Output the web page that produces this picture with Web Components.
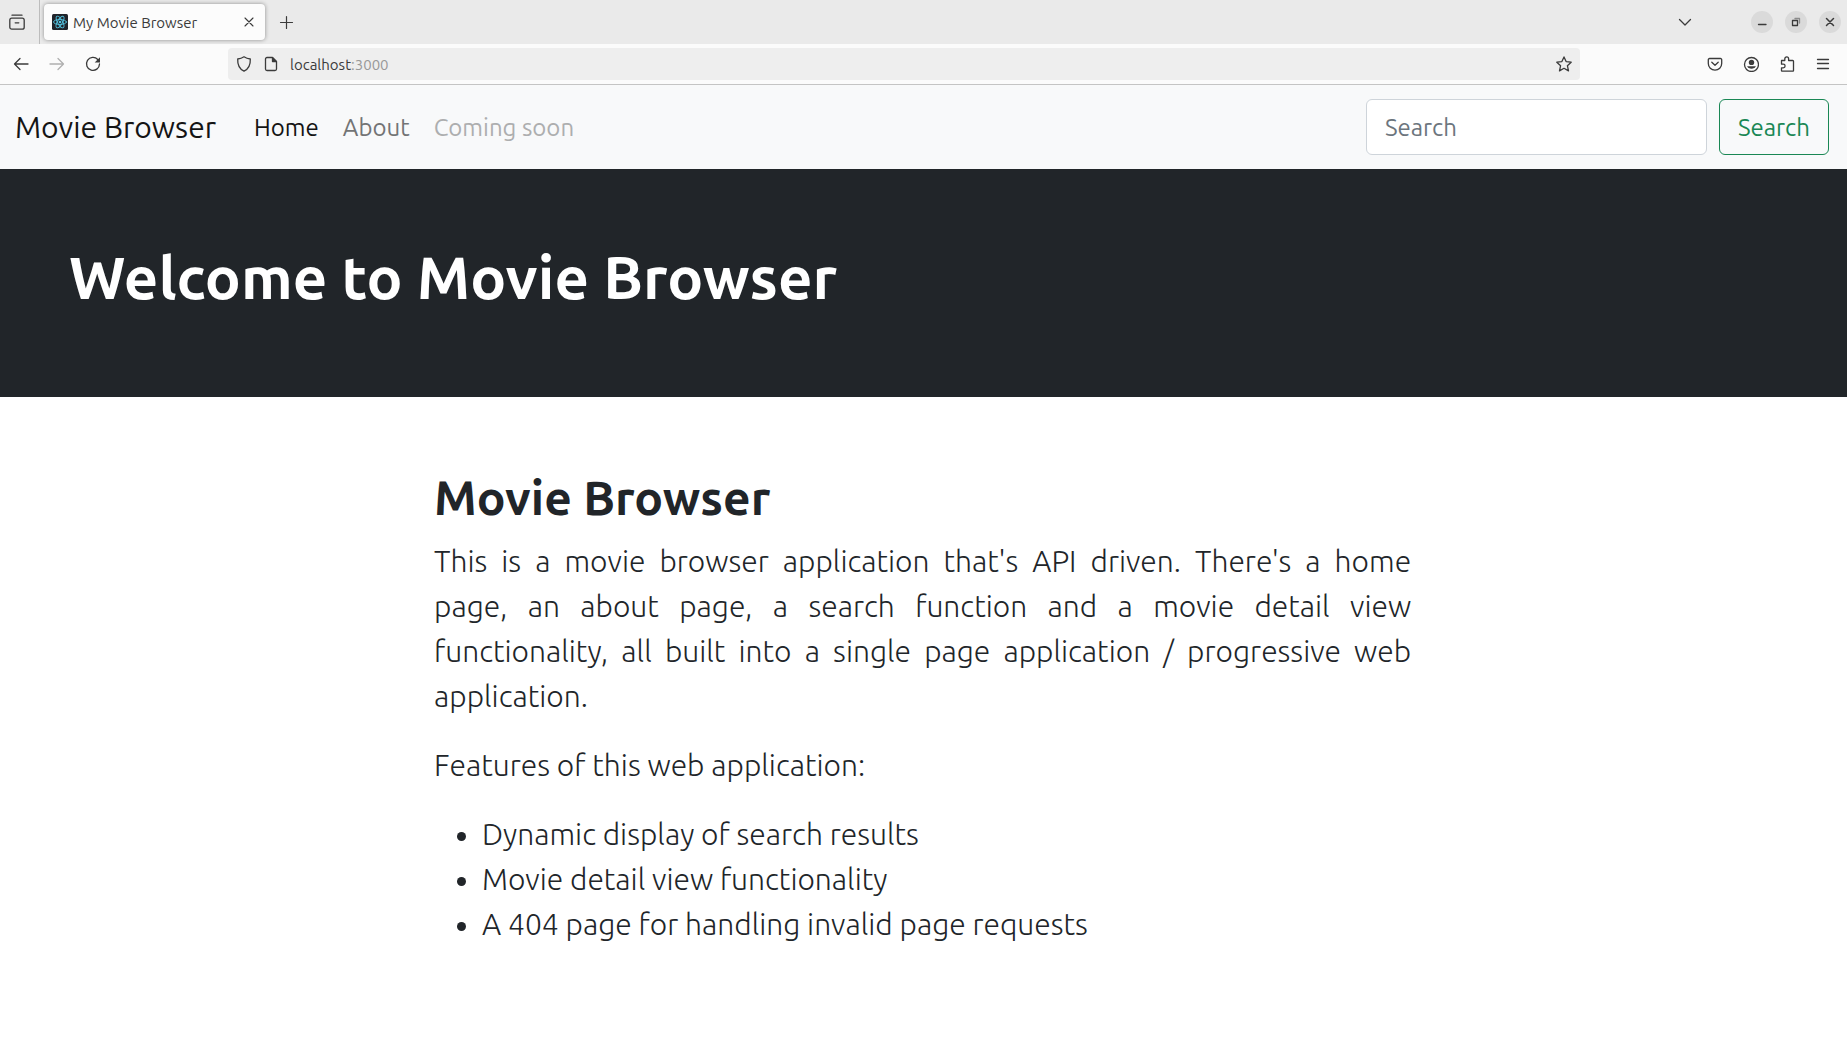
<!DOCTYPE html>
<html lang="en">
<head>
<meta charset="utf-8">
<title>My Movie Browser</title>
<style>
  html, body { margin: 0; min-height: 100%; background: #fff; }
  body {
    font-family: Ubuntu, "Noto Sans", sans-serif;
    color: #212529;
    font-size: 24px;
    line-height: 37px;
  }
</style>
</head>
<body>
<browser-chrome></browser-chrome>
<movie-navbar brand="Movie Browser">
  <nav-item href="#home" active>Home</nav-item>
  <nav-item href="#about">About</nav-item>
  <nav-item disabled>Coming soon</nav-item>
  <search-form slot="end"></search-form>
</movie-navbar>
<hero-banner>Welcome to Movie Browser</hero-banner>
<home-content></home-content>

<script>
const ICONS = {
  archive: '<path d="M3 1.200h10"/><rect x=".8" y="4.200" width="14.400" height="11" rx="2"/><path d="M6.200 8.800h3.600"/>',
  'tab-close': '<path d="M4 4l8 8M12 4l-8 8" stroke-width="1.1"/>',
  close: '<path d="M4.500 4.500l7 7M11.500 4.500l-7 7" stroke-width="1.5"/>',
  plus: '<path d="M8.500 2.500v12M2.500 8.500h12" stroke-width="1.200"/>',
  chevron: '<path d="M2.500 5.500L8 11l5.500-5.500"/>',
  back: '<path d="M15 8H1.500M7 2.500L1.500 8 7 13.500"/>',
  forward: '<path d="M1 8h13.500M9 2.500L14.500 8 9 13.500"/>',
  reload: '<path d="M12.800 3.500A6.500 6.500 0 1 0 14.500 8"/><path d="M15 1.200v5.300H9.700z" fill="currentColor" stroke="none"/>',
  shield: '<path d="M8 .8c2 1.400 4 2 6.300 2.200C14.600 9 12.500 13 8 15.200 3.500 13 1.400 9 1.700 3 4 2.800 6 2.200 8 .8z"/>',
  page: '<path d="M9.500 1.500H4a1.500 1.500 0 0 0-1.500 1.500v10A1.500 1.500 0 0 0 4 14.500h8a1.500 1.500 0 0 0 1.500-1.500V5.500z"/><path d="M9.500 1.800v3.700h3.700z" fill="currentColor"/>',
  star: '<path d="M8 .9l2.100 4.700 5.100.600-3.800 3.500 1.100 5.200L8 12.300l-4.500 2.600 1.100-5.200L.8 6.200l5.100-.600z"/>',
  pocket: '<path d="M2.500 2.500h11a1.200 1.200 0 0 1 1.200 1.200V7.500a6.700 6.700 0 0 1-13.400 0V3.700A1.200 1.200 0 0 1 2.500 2.500z"/><path d="M4.800 6.300L8 9.300l3.200-3"/>',
  account: '<circle cx="8.500" cy="8.500" r="7"/><circle cx="8.500" cy="6.400" r="2.700" fill="currentColor" stroke="none"/><path d="M4 10.200h9a5.200 5.200 0 0 1-9 0z" fill="currentColor" stroke="none"/>',
  puzzle: '<path d="M2.500 4.500h3.300V2.800a1.900 1.900 0 0 1 3.800 0V4.500H13.800a.7.7 0 0 1 .7.700V14.500a.7.7 0 0 1-.7.700H3.200a.7.7 0 0 1-.7-.700V11.800H4.300a1.800 1.800 0 0 0 0-3.600H2.500z"/>',
  menu: '<path d="M2.500 3.500h11M2.500 7.500h11M2.500 12.500h11"/>',
  minimize: '<path d="M4.500 10.500h7.500"/>',
  restore: '<path d="M4.500 6.500h5v5h-5z"/><path d="M7 4.500h4.500V9" opacity=".5"/>',
  react: '<rect width="16" height="16" rx="1.500" fill="#20232a" stroke="none"/><g stroke="#53c1de" stroke-width=".9"><ellipse cx="8" cy="8" rx="6.500" ry="2.500"/><ellipse cx="8" cy="8" rx="6.500" ry="2.500" transform="rotate(60 8 8)"/><ellipse cx="8" cy="8" rx="6.500" ry="2.500" transform="rotate(120 8 8)"/></g><circle cx="8" cy="8" r="1.300" fill="#53c1de" stroke="none"/>'
};

function define(name, render) {
  customElements.define(name, class extends HTMLElement {
    connectedCallback() {
      if (this.shadowRoot) return;
      this.attachShadow({ mode: 'open' }).innerHTML = render(this);
    }
  });
}

define('ui-icon', el => `
  <style>
    :host { display: block; flex: none; width: 16px; height: 16px; }
    svg { display: block; fill: none; stroke: currentColor; stroke-width: 1.3; stroke-linecap: round; stroke-linejoin: round; }
  </style>
  <svg width="16" height="16" viewBox="0 0 16 16" aria-hidden="true">${ICONS[el.getAttribute('name')]}</svg>`);

define('icon-button', el => `
  <style>
    :host { display: flex; flex: none; width: 36px; height: 36px; }
    :host([small]) { width: 24px; height: 24px; }
    :host([round]) { width: 22px; height: 22px; }
    button { display: flex; align-items: center; justify-content: center; flex: 1; border: 0; padding: 0; background: none; color: #3b3b3b; border-radius: 4px; }
    button:disabled { color: #b0b0b0; }
    :host([round]) button { border-radius: 50%; background: #dadada; }
  </style>
  <button type="button" aria-label="${el.getAttribute('label')}" ${el.hasAttribute('off') ? 'disabled' : ''}>
    <ui-icon name="${el.getAttribute('icon')}"></ui-icon>
  </button>`);

define('browser-chrome', () => `
  <style>
    :host { display: block; font-size: 15px; line-height: 21px; color: #3b3b3b; border-bottom: 1px solid #c4c4c4; }
    .tabs { display: flex; align-items: center; height: 44px; background: #eaeaea; box-sizing: border-box; padding-right: 6px; }
    .view { display: flex; align-items: center; height: 44px; padding-right: 5px; border-right: 1px solid #bdbdbd; }
    .view icon-button { width: 34px; }
    .tab { display: flex; align-items: center; box-sizing: border-box; width: 221px; height: 36px; margin: 0 9px 0 4px; padding: 0 4px 0 8px; gap: 5px; background: #fcfcfc; border-radius: 4px; box-shadow: 0 0 4px rgba(0,0,0,.4); }
    .tab span { flex: 1; white-space: nowrap; }
    .grow { flex: 1; }
    .list { margin-right: 54px; }
    .window { display: flex; gap: 12px; }
    .tools { display: flex; align-items: center; height: 40px; background: #fbfbfb; padding: 0 6px 0 3px; }
    .address { flex: 1; display: flex; align-items: center; box-sizing: border-box; height: 32px; margin: 0 117px; padding: 0 4px 0 8px; background: #eee; border-radius: 4px; gap: 11px; }
    .address span { flex: 1; }
    .address i { font-style: normal; color: #999; }
  </style>
  <div class="tabs">
    <div class="view"><icon-button icon="archive" label="Recent browsing"></icon-button></div>
    <div class="tab"><ui-icon name="react"></ui-icon><span>My Movie Browser</span><icon-button small icon="tab-close" label="Close tab"></icon-button></div>
    <icon-button small icon="plus" label="New tab"></icon-button>
    <div class="grow"></div>
    <icon-button small class="list" icon="chevron" label="List all tabs"></icon-button>
    <div class="window">
      <icon-button round icon="minimize" label="Minimize"></icon-button>
      <icon-button round icon="restore" label="Restore"></icon-button>
      <icon-button round icon="close" label="Close window"></icon-button>
    </div>
  </div>
  <div class="tools">
    <icon-button icon="back" label="Back"></icon-button>
    <icon-button icon="forward" label="Forward" off></icon-button>
    <icon-button icon="reload" label="Reload"></icon-button>
    <div class="address">
      <ui-icon name="shield"></ui-icon><ui-icon name="page"></ui-icon>
      <span>localhost<i>:3000</i></span>
      <icon-button small icon="star" label="Bookmark this page"></icon-button>
    </div>
    <icon-button icon="pocket" label="Save to Pocket"></icon-button>
    <icon-button icon="account" label="Account"></icon-button>
    <icon-button icon="puzzle" label="Extensions"></icon-button>
    <icon-button icon="menu" label="Menu"></icon-button>
  </div>`);

define('nav-item', el => `
  <style>
    :host { display: block; }
    a { color: #737475; text-decoration: none; padding: 12px; display: block; white-space: nowrap; }
    :host([active]) a { color: #141414; }
    :host([disabled]) a { color: #adaeaf; }
  </style>
  <a ${el.hasAttribute('disabled') ? 'aria-disabled="true"' : `href="${el.getAttribute('href')}"`}><slot></slot></a>`);

define('search-form', () => `
  <style>
    form { display: flex; gap: 12px; }
    input, button { box-sizing: border-box; height: 56px; font: inherit; border-radius: 6px; padding: 0 18px; }
    input { width: 341px; border: 1px solid #ced4da; background: #fff; color: #212529; }
    input::placeholder { color: #6c757d; opacity: 1; }
    button { border: 1px solid #198754; color: #198754; background: transparent; }
  </style>
  <form role="search"><input type="search" placeholder="Search" aria-label="Search"><button type="button">Search</button></form>`);

define('movie-navbar', el => `
  <style>
    :host { display: block; background: #f8f9fa; }
    nav { display: flex; align-items: center; height: 84px; padding: 0 18px 0 15px; }
    .brand { font-size: 30px; line-height: 45px; color: #141414; text-decoration: none; margin-right: 26px; white-space: nowrap; }
    .links { display: flex; flex: 1; }
  </style>
  <nav><a class="brand" href="#">${el.getAttribute('brand')}</a><div class="links"><slot></slot></div><slot name="end"></slot></nav>`);

define('hero-banner', () => `
  <style>
    :host { display: block; background: #212529; color: #fff; padding: 72px 72px 84px 69px; }
    h1 { margin: 0; font-size: 60px; line-height: 72px; font-weight: 600; }
  </style>
  <h1><slot></slot></h1>`);

define('home-content', () => `
  <style>
    :host { display: block; margin: 0 23.6% 0 23.5%; padding: 72px 0; font-size: 30px; line-height: 45px; font-weight: 300; }
    h2 { margin: 0 0 13px; font-size: 48px; line-height: 57px; font-weight: 600; }
    p, ul { margin: 0 0 24px; }
    p { text-align: justify; }
    ul { padding-left: 48px; }
  </style>
  <h2>Movie Browser</h2>
  <p>This is a movie browser application that's API driven. There's a home page, an about page, a search function and a movie detail view functionality, all built into a single page application / progressive web application.</p>
  <p>Features of this web application:</p>
  <ul>
    <li>Dynamic display of search results</li>
    <li>Movie detail view functionality</li>
    <li>A 404 page for handling invalid page requests</li>
  </ul>`);
</script>
</body>
</html>
